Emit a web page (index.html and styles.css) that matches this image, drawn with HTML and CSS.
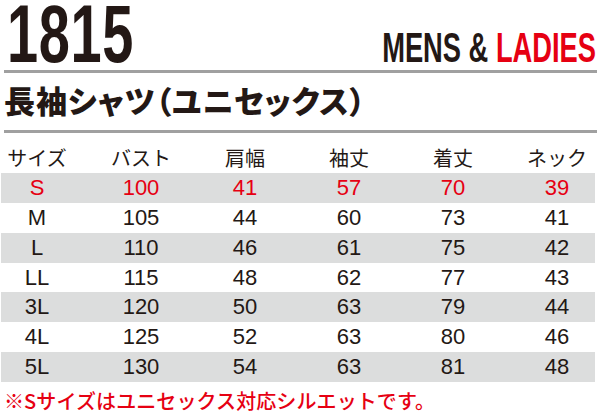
FILE: index.html
```html
<!DOCTYPE html>
<html lang="ja">
<head>
<meta charset="utf-8">
<link rel="stylesheet" href="styles.css">
</head>
<body>
<div class="page">
  <header class="head">
    <span class="code">1815</span>
    <span class="gender">MENS &amp; <span class="red">LADIES</span></span>
  </header>
  <div class="rule"></div>
  <h1 class="title">長袖シャツ（ユニセックス）</h1>
  <div class="rule"></div>
  <div class="table">
    <div class="row hrow"><span>サイズ</span><span>バスト</span><span>肩幅</span><span>袖丈</span><span>着丈</span><span>ネック</span></div>
    <div class="row band red"><span>S</span><span>100</span><span>41</span><span>57</span><span>70</span><span>39</span></div>
    <div class="row"><span>M</span><span>105</span><span>44</span><span>60</span><span>73</span><span>41</span></div>
    <div class="row band"><span>L</span><span>110</span><span>46</span><span>61</span><span>75</span><span>42</span></div>
    <div class="row"><span>LL</span><span>115</span><span>48</span><span>62</span><span>77</span><span>43</span></div>
    <div class="row band"><span>3L</span><span>120</span><span>50</span><span>63</span><span>79</span><span>44</span></div>
    <div class="row"><span>4L</span><span>125</span><span>52</span><span>63</span><span>80</span><span>46</span></div>
    <div class="row band"><span>5L</span><span>130</span><span>54</span><span>63</span><span>81</span><span>48</span></div>
  </div>
  <p class="note">※Sサイズはユニセックス対応シルエットです。</p>
</div>
</body>
</html>
```
FILE: styles.css
```css
html, body {
  margin: 0;
  padding: 0;
  overflow: hidden;
  background: #ffffff;
}
.page {
  width: 600px;
  height: 420px;
  overflow: hidden;
  color: #231815;
  font-family: "Liberation Sans", Arial, sans-serif;
}
.head {
  display: flex;
  justify-content: space-between;
  align-items: baseline;
  height: 70px;
  padding: 0 4px 0 7px;
}
.code {
  display: inline-block;
  flex-shrink: 0;
  margin-top: -12px;
  font-size: 81px;
  line-height: normal;
  font-weight: 700;
  transform: scaleX(0.69);
  transform-origin: left center;
  letter-spacing: 1px;
}
.gender {
  display: inline-block;
  flex-shrink: 0;
  font-size: 42px;
  line-height: normal;
  font-weight: 700;
  transform: scaleX(0.65);
  transform-origin: right center;
  white-space: nowrap;
}
.red {
  color: #e60012;
}
.rule {
  height: 3px;
  margin: 0 3px 0 4px;
  background: #a0a0a0;
}
.title {
  margin: 0 0 3px 0;
  padding-left: 4px;
  height: 54px;
  font-family: "Noto Sans CJK JP", sans-serif;
  font-size: 31px;
  line-height: 54px;
  font-weight: 900;
  font-feature-settings: "palt";
  letter-spacing: 0.9px;
}
.table {
  margin: 0 5px 0 1px;
}
.row {
  display: grid;
  grid-template-columns: 88px 104px 104px 104px 104px 90px;
  height: 29.86px;
  line-height: 29.86px;
  font-size: 22px;
  text-align: center;
}
.row > span:first-child {
  padding-right: 16px;
}
.row > span:last-child {
  padding-left: 14px;
}
.band {
  background: #dcdddd;
}
.hrow {
  height: 30px;
  padding-top: 10px;
  line-height: 30px;
  font-family: "Noto Sans CJK JP", sans-serif;
  font-size: 20px;
}
.note {
  margin: 0;
  padding-left: 4px;
  font-family: "Noto Sans CJK JP", sans-serif;
  font-size: 20px;
  font-weight: 500;
  line-height: 38px;
  color: #e60012;
  letter-spacing: 0.1px;
}
```
